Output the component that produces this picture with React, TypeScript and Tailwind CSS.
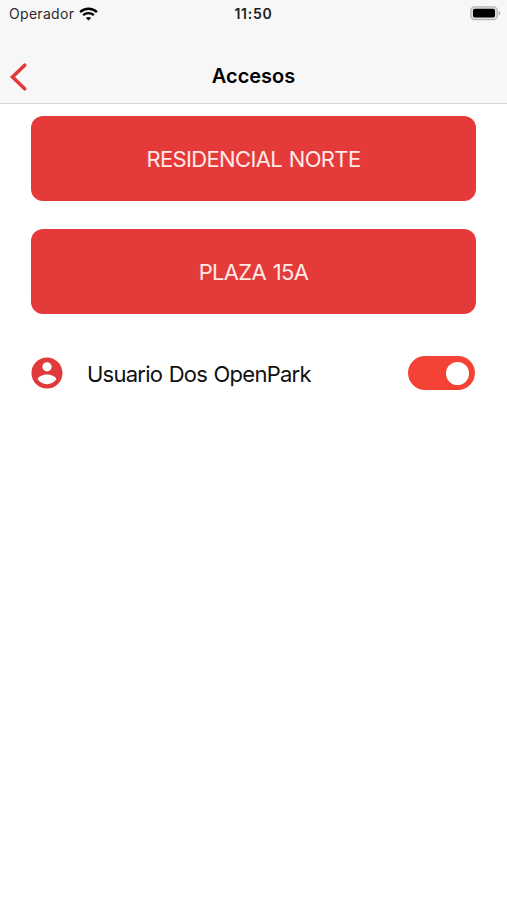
function StatusBar() {
  return (
    <section className="relative flex h-[27px] items-center justify-between pl-[9px] pr-[6px] text-[#2b2b2b]">
      <article className="flex items-center gap-[5px]">
        <span className="text-[14px] tracking-[0.3px]">Operador</span>
        <svg width="19" height="14" viewBox="0 0 19 14" fill="none" stroke="#000">
          <path d="M1.1 5.1C5.9 0.6 13.1 0.6 17.9 5.1" strokeWidth="2.4" />
          <path d="M4.1 8.2C7.2 5.4 11.8 5.4 14.9 8.2" strokeWidth="2.3" />
          <path
            d="M9.5 13.6L6.9 11C8.4 9.8 10.6 9.8 12.1 11Z"
            fill="#000"
            stroke="none"
          />
        </svg>
      </article>
      <span className="absolute inset-x-0 text-center text-[14px] font-semibold tracking-[0.75px] text-[#1c1c1c]">
        11:50
      </span>
      <svg width="31" height="15" viewBox="0 0 31 15">
        <rect x="0.8" y="0.8" width="26.4" height="12.8" rx="3.8" fill="#dedede" stroke="#b4b4b4" strokeWidth="1.2" />
        <rect x="3" y="2.8" width="22" height="8.8" rx="1.8" fill="#000" />
        <path d="M28.6 5C30.8 5.8 30.8 8.6 28.6 9.4Z" fill="#a8a8a8" />
      </svg>
    </section>
  );
}

function Header() {
  return (
    <header className="h-[104px] border-b border-[#d8d8d8] bg-[#f7f7f7]">
      <StatusBar />
      <section className="relative mt-[23px] flex h-[54px] items-center">
        <button className="ml-[9px]" aria-label="Volver">
          <svg width="19" height="30" viewBox="0 0 19 30" fill="none">
            <path
              d="M15.7 3.2L3.5 15L15.7 26.8"
              stroke="#e03a3a"
              strokeWidth="3.6"
              strokeLinecap="round"
            />
          </svg>
        </button>
        <h1 className="pointer-events-none absolute inset-x-0 pb-[2px] text-center text-[20px] font-semibold text-black">
          Accesos
        </h1>
      </section>
    </header>
  );
}

function AccessButton({ label }: { label: string }) {
  return (
    <button className="flex h-[85px] w-full items-center justify-center rounded-[12px] bg-[#e43b3a] pt-px text-[22px] tracking-[-0.65px] [word-spacing:1.2px] text-[#ffe9e7]">
      {label}
    </button>
  );
}

function UserRow() {
  return (
    <article className="mt-[41px] flex h-[36px] items-center">
      <svg width="32" height="32" viewBox="1.7 1.7 20.6 20.6" fill="#e03a3a">
        <path d="M12,19.2C9.5,19.2 7.29,17.92 6,16C6.03,14 10,12.9 12,12.9C14,12.9 17.97,14 18,16C16.71,17.92 14.5,19.2 12,19.2M12,5A3,3 0 0,1 15,8A3,3 0 0,1 12,11A3,3 0 0,1 9,8A3,3 0 0,1 12,5M12,2A10,10 0 0,0 2,12A10,10 0 0,0 12,22A10,10 0 0,0 22,12C22,6.47 17.5,2 12,2Z" />
      </svg>
      <span className="ml-[24px] flex-1 pt-[2px] text-[22px] tracking-[-0.75px] [word-spacing:1px] text-[#111]">
        Usuario Dos OpenPark
      </span>
      <span className="mr-[1px] flex h-[34px] w-[67px] items-center justify-end rounded-full bg-[#f44336] pr-[6px]">
        <span className="size-[23px] rounded-full bg-white" />
      </span>
    </article>
  );
}

export default function App() {
  return (
    <main className="h-[900px] w-full overflow-hidden bg-white font-['Inter',sans-serif]">
      <Header />
      <section className="px-[31px] pt-[12px]">
        <div className="flex flex-col gap-[28px]">
          <AccessButton label="RESIDENCIAL NORTE" />
          <AccessButton label="PLAZA 15A" />
        </div>
        <UserRow />
      </section>
    </main>
  );
}
